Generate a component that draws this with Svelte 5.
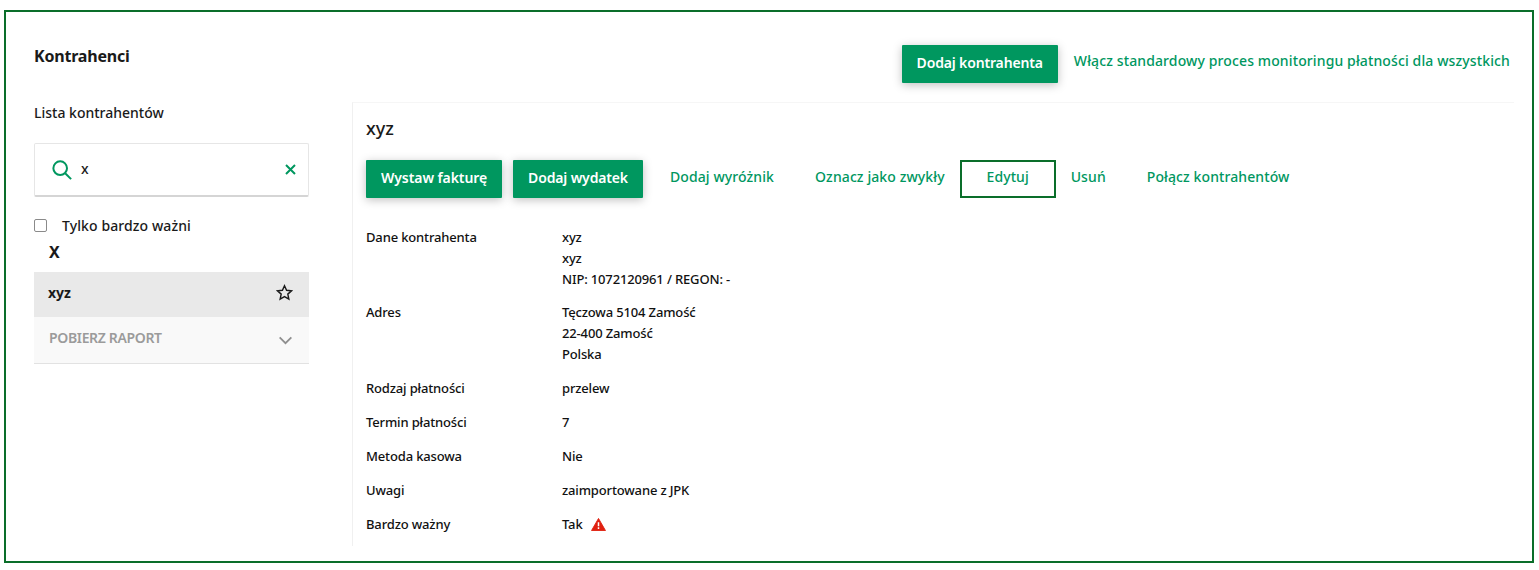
<script>
	const details = [
		{ label: "Dane kontrahenta", lines: ["xyz", "xyz", "NIP: 1072120961 / REGON: -"] },
		{ label: "Adres", lines: ["Tęczowa 5104 Zamość", "22-400 Zamość", "Polska"] },
		{ label: "Rodzaj płatności", lines: ["przelew"] },
		{ label: "Termin płatności", lines: ["7"] },
		{ label: "Metoda kasowa", lines: ["Nie"] },
		{ label: "Uwagi", lines: ["zaimportowane z JPK"] },
		{ label: "Bardzo ważny", lines: ["Tak"], warn: true }
	];
</script>

<main class="frame">
	<header class="top">
		<h1>Kontrahenci</h1>
		<div class="top-actions">
			<button class="btn">Dodaj kontrahenta</button>
			<a class="link monitor" href="#m">Włącz standardowy proces monitoringu płatności dla wszystkich</a>
		</div>
	</header>

	<div class="columns">
		<aside class="side">
			<h2>Lista kontrahentów</h2>
			<div class="search">
				<svg class="lens" width="20" height="20" viewBox="0 0 22 22" fill="none" stroke="#00975f" stroke-width="2.200">
					<circle cx="9" cy="9" r="7.500" />
					<path d="M14.500 14.500l6.500 6.500" />
				</svg>
				<span class="query">x</span>
				<svg class="clear" width="11" height="11" viewBox="0 0 11 11" fill="none" stroke="#00975f" stroke-width="2">
					<path d="M1 1l9 9M10 1l-9 9" />
				</svg>
			</div>
			<label class="only">
				<span class="box"></span>
				<span class="only-text">Tylko bardzo ważni</span>
			</label>
			<div class="letter">X</div>
			<div class="row">
				<b>xyz</b>
				<svg class="star" width="17" height="17" viewBox="0 0 18 18" fill="none" stroke="#1a1a1a" stroke-width="1.500">
					<path d="M9 1.800l2.200 4.800 5.200.6-3.900 3.500 1.100 5.200L9 13.300l-4.600 2.600 1.100-5.200-3.900-3.500 5.200-.6z" />
				</svg>
			</div>
			<div class="report">
				<span>POBIERZ RAPORT</span>
				<svg class="chevron" width="15" height="9" viewBox="0 0 16 10" fill="none" stroke="#8f8f8f" stroke-width="2">
					<path d="M1.500 1.500L8 8l6.500-6.500" />
				</svg>
			</div>
		</aside>

		<section class="detail">
			<h3>xyz</h3>
			<div class="actions">
				<button class="btn first">Wystaw fakturę</button>
				<button class="btn second">Dodaj wydatek</button>
				<a class="link a1" href="#a">Dodaj wyróżnik</a>
				<a class="link a2" href="#b">Oznacz jako zwykły</a>
				<a class="link edit" href="#c">Edytuj</a>
				<a class="link a3" href="#d">Usuń</a>
				<a class="link a4" href="#e">Połącz kontrahentów</a>
			</div>
			<div class="table">
				{#each details as d}
					<div class="item">
						<div class="label">{d.label}</div>
						<div class="value">
							{#each d.lines as line}
								<div class="line">
									{line}
									{#if d.warn}
										<svg class="warn" width="15" height="13" viewBox="0 0 16 14">
											<path d="M8 .5L15.500 13.500H.5z" fill="#e02010" stroke="#e02010" stroke-linejoin="round" />
											<path d="M7.200 4.500h1.600v4.500H7.200zM7.200 10h1.600v1.800H7.200z" fill="#fff" />
										</svg>
									{/if}
								</div>
							{/each}
						</div>
					</div>
				{/each}
			</div>
		</section>
	</div>
</main>

<style>
	:global(body) {
		background: #fff;
		font-family: "Noto Sans", sans-serif;
		color: #1a1a1a;
	}
	.frame {
		box-sizing: border-box;
		width: 1530px;
		height: 553px;
		margin: 10px 0 0 4px;
		border: 2px solid #0a6e2a;
		padding: 30px 18px 0 28px;
	}
	.top {
		display: flex;
		justify-content: space-between;
		height: 60px;
		padding-right: 4px;
	}
	h1 {
		margin: 3px 0 0;
		font-size: 16px;
		line-height: 22px;
		font-weight: 700;
		letter-spacing: -0.2px;
	}
	.top-actions {
		display: flex;
		align-items: flex-start;
		gap: 16px;
		padding-top: 3px;
	}
	.btn {
		height: 38px;
		padding: 0 15px 3px;
		border: 0;
		border-radius: 1px;
		background: #00975f;
		color: #fff;
		font: 600 14px "Noto Sans", sans-serif;
		letter-spacing: -0.15px;
		box-shadow: 0 2px 10px rgba(0, 0, 0, 0.25);
	}
	.first {
		letter-spacing: -0.08px;
	}
	.link {
		color: #00975f;
		font-size: 14px;
		font-weight: 500;
		letter-spacing: 0.1px;
		text-decoration: none;
	}
	.monitor {
		line-height: 32px;
		letter-spacing: 0.12px;
	}
	.columns {
		display: flex;
	}
	.side {
		width: 275px;
		margin-right: 43px;
	}
	h2 {
		margin: 0 0 19px;
		font-size: 14px;
		line-height: 22px;
		font-weight: 500;
	}
	.search {
		box-sizing: border-box;
		display: flex;
		align-items: center;
		height: 54px;
		padding: 0 12px 0 17px;
		border: 1px solid #e6e6e6;
		border-bottom: 2px solid #d5d5d5;
		border-radius: 2px;
	}
	.query {
		flex: 1;
		margin-left: 9px;
		font-size: 14px;
		font-weight: 500;
		padding-bottom: 2px;
	}
	.only {
		display: flex;
		align-items: center;
		margin-top: 17px;
		font-size: 14px;
		font-weight: 500;
		letter-spacing: 0.1px;
		line-height: 22px;
	}
	.only-text {
		padding-top: 1px;
	}
	.box {
		box-sizing: border-box;
		width: 13px;
		height: 13px;
		margin-right: 15px;
		border: 1px solid #8a8a8a;
		border-radius: 2px;
	}
	.letter {
		margin: 5px 0 0 15px;
		font-size: 16px;
		line-height: 20px;
		font-weight: 700;
	}
	.row {
		display: flex;
		align-items: center;
		justify-content: space-between;
		box-sizing: border-box;
		height: 45px;
		margin-top: 10px;
		padding: 0 16px 5px 14px;
		background: #e9e9e9;
		font-size: 14px;
	}
	.star {
		margin-top: 1px;
	}
	.report {
		box-sizing: border-box;
		display: flex;
		align-items: center;
		justify-content: space-between;
		height: 47px;
		padding: 0 16px 6px 15px;
		background: #f9f9f9;
		border-bottom: 1px solid #e2e2e2;
		color: #9b9b9b;
		font-size: 14px;
		font-weight: 600;
		letter-spacing: -0.35px;
	}
	.chevron {
		margin-top: 6px;
	}
	.detail {
		flex: 1;
		border-left: 1px solid #f0f0f0;
		border-top: 1px solid #f6f6f6;
		padding: 0 0 0 13px;
		height: 443px;
	}
	h3 {
		margin: 13px 0 0;
		font-size: 18px;
		line-height: 24px;
		font-weight: 500;
	}
	.actions {
		display: flex;
		align-items: center;
		margin-top: 20px;
	}
	.second {
		margin-left: 11px;
	}
	.actions .link {
		margin-bottom: 6px;
	}
	.a1 {
		margin-left: 27px;
	}
	.a2 {
		margin-left: 41px;
	}
	.actions .edit {
		box-sizing: border-box;
		width: 96px;
		height: 38px;
		margin: 0 0 0 15px;
		border: 2px solid #0a6e2a;
		text-align: center;
		line-height: 30px;
	}
	.a3 {
		margin-left: 15px;
	}
	.a4 {
		margin-left: 41px;
	}
	.table {
		margin-top: 29px;
		font-size: 13px;
		font-weight: 500;
		letter-spacing: -0.15px;
		color: #111;
	}
	.item {
		display: flex;
		margin-bottom: 13px;
	}
	.item:first-child {
		margin-bottom: 12px;
	}
	.label {
		width: 196px;
		line-height: 21px;
	}
	.line {
		display: flex;
		align-items: center;
		gap: 8px;
		line-height: 21px;
	}
</style>
